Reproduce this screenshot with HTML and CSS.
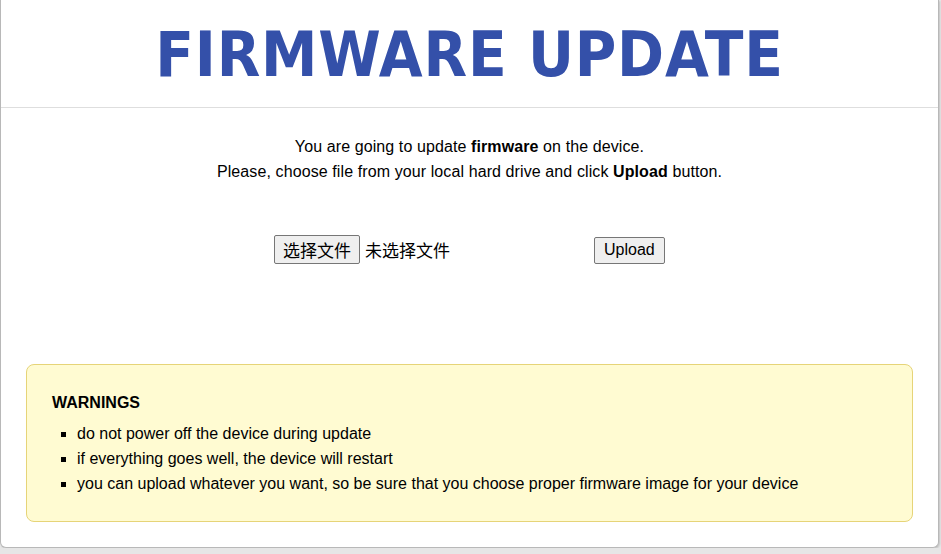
FILE: index.html
```html
<!DOCTYPE html>
<html>
<head>
	<meta charset="UTF-8">
	<title>Firmware Update</title>
	<link rel="stylesheet" href="styles.css">
</head>
<body>
	<div id="page">
		<div id="header">
			<h1>FIRMWARE UPDATE</h1>
		</div>
		<div id="content">
			<p class="intro">You are going to update <b>firmware</b> on the device.<br>
			Please, choose file from your local hard drive and click <b>Upload</b> button.</p>

			<form id="upload_form" onsubmit="return false;">
				<span class="file_pick">
					<button type="button" class="file_button">选择文件</button>
					<span class="file_name">未选择文件</span>
				</span>
				<button type="submit" id="upload_button">Upload</button>
			</form>

			<div id="warnings">
				<h4>WARNINGS</h4>
				<ul>
					<li>do not power off the device during update</li>
					<li>if everything goes well, the device will restart</li>
					<li>you can upload whatever you want, so be sure that you choose proper firmware image for your device</li>
				</ul>
			</div>
		</div>
	</div>
</body>
</html>
```

FILE: styles.css
```css
html, body {
	margin:0;
	padding:0;
	background-color:#e6e6e6;
	font-family:"Liberation Sans", Arial, sans-serif;
	font-size:16px;
	color:#000;
}
#page {
	width:937px;
	height:547px;
	background-color:#fff;
	border:1px solid #b8b8b8;
	border-top:none;
	border-radius:0 0 6px 6px;
	box-shadow:1px 1px 2px rgba(0,0,0,0.15);
}
#header {
	height:107px;
	border-bottom:1px solid #dedede;
	text-align:center;
}
#header h1 {
	margin:0;
	padding-top:17px;
	font-family:"DejaVu Sans Condensed", "DejaVu Sans", sans-serif;
	font-weight:bold;
	font-size:63px;
	letter-spacing:0.8px;
	line-height:76px;
	color:#3450a9;
}
#content {
	padding:0 25px;
}
.intro {
	margin:0;
	padding-top:26px;
	line-height:25px;
	text-align:center;
	letter-spacing:0.1px;
}
#upload_form {
	display:flex;
	align-items:center;
	margin-top:50px;
	padding-left:248px;
	height:30px;
}
.file_pick {
	display:flex;
	align-items:center;
	width:320px;
}
.file_button, #upload_button {
	font-family:"Liberation Sans", Arial, "Noto Sans CJK SC", sans-serif;
	font-size:16px;
	color:#000;
	background-color:#efefef;
	border:1px solid #767676;
	border-radius:2px;
	margin:0;
}
.file_button {
	height:29px;
	padding:0 8px;
	font-size:17px;
}
.file_name {
	margin-left:5px;
	font-family:"Noto Sans CJK SC", sans-serif;
	font-size:17px;
}
#upload_button {
	height:27px;
	padding:0 9px;
	margin-top:2px;
}
#warnings {
	margin-top:100px;
	height:158px;
	box-sizing:border-box;
	padding:28px 25px 0 25px;
	background-color:#fffbd2;
	border:1px solid #e6d478;
	border-radius:8px;
}
#warnings h4 {
	margin:0 0 9px 0;
	font-size:16px;
	line-height:19px;
}
#warnings ul {
	margin:0;
	padding-left:25px;
	list-style-type:square;
}
#warnings li {
	line-height:25px;
}
```
